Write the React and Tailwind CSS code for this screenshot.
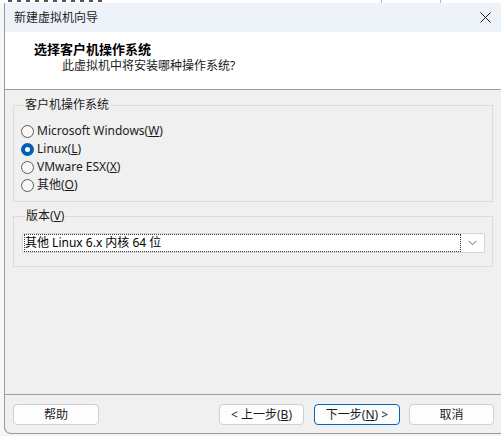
import React from "react";

const font = { fontFamily: '"Noto Sans", "Noto Sans CJK SC", sans-serif' };

const Radio = ({ checked, children }) => (
	<div className="flex items-center h-[18px] gap-[3px]">
		{checked ? (
			<span className="w-[13px] h-[13px] rounded-full bg-[#005fb8] flex items-center justify-center">
				<span className="w-[5px] h-[5px] rounded-full bg-white" />
			</span>
		) : (
			<span className="w-[13px] h-[13px] rounded-full border border-[#5c5c5c] bg-[#f7f7f7]" />
		)}
		<span className="text-[12px] leading-[16px] text-[#1b1b1b]">{children}</span>
	</div>
);

const Button = ({ children, primary, className = "" }) => (
	<button
		className={
			"h-[21px] rounded-[4px] bg-[#fdfdfd] text-[12px] leading-[16px] text-[#1b1b1b] border " +
			(primary ? "border-[#0067c0] " : "border-[#d0d0d0] ") +
			className
		}
	>
		{children}
	</button>
);

// bits of the menu bar of the window behind the dialog
const marks = [8, 14, 40, 46, 52, 60, 66, 100, 106, 112, 120];

export default function App() {
	return (
		<div className="w-[501px] h-[436px] overflow-hidden bg-[#f4f4f4] flex flex-col" style={font}>
			<div className="h-[3px] bg-white flex items-start">
				{marks.map((x, i) => (
					<div key={i} className="w-[4px] h-[2px] bg-[#555] mr-[2px]" style={{ marginLeft: i === 0 ? x : 3 }} />
				))}
				<div className="flex-1" />
				<div className="w-[60px] h-[3px] border-x border-[#bbb] mr-[60px]" />
			</div>
			<div className="flex flex-1">
				<div className="w-[4px] bg-[#f7f7f7]" />
				<div className="flex-1 h-[431px] flex flex-col bg-[#f0f0f0] border-l border-b border-[#9a9a9a] rounded-bl-[7px] rounded-tr-[7px] overflow-hidden">
					<div className="h-[29px] bg-[#eef2f9] flex items-center justify-between pl-[9px] pr-[9px]">
						<span className="text-[12px] text-[#1b1b1b]">新建虚拟机向导</span>
						<svg width="11" height="11" viewBox="0 0 11 11" className="mr-[1px]">
							<path d="M0.5 0.5 L10.5 10.5 M10.5 0.5 L0.5 10.5" stroke="#1b1b1b" strokeWidth="1" />
						</svg>
					</div>
					<div className="h-[58px] bg-white border-b border-[#a0a0a0] flex flex-col pt-[9px]">
						<div className="pl-[29px] text-[13px] leading-[16px] font-bold text-black">选择客户机操作系统</div>
						<div className="pl-[57px] mt-[1px] text-[12px] leading-[16px] text-[#1b1b1b]">此虚拟机中将安装哪种操作系统?</div>
					</div>
					<div className="flex-1 flex flex-col">
						<fieldset className="mt-[7px] mx-[8px] border border-[#dcdcdc] px-[7px] pb-[7px] pt-[9px]">
							<legend className="ml-[3px] px-[1px] text-[12px] leading-[16px] text-[#1b1b1b]">客户机操作系统</legend>
							<Radio>
								Microsoft Windows(<u>W</u>)
							</Radio>
							<Radio checked>
								Linux(<u>L</u>)
							</Radio>
							<Radio>
								VMware ESX(<u>X</u>)
							</Radio>
							<Radio>
								其他(<u>O</u>)
							</Radio>
						</fieldset>
						<fieldset className="mt-[6px] mx-[8px] border border-[#dcdcdc] pl-[8px] pr-[7px] pb-[13px] pt-[9px]">
							<legend className="ml-[3px] px-[1px] text-[12px] leading-[16px] text-[#1b1b1b]">
								版本(<u>V</u>)
							</legend>
							<div className="h-[20px] bg-white border border-[#d4d4d4] rounded-[2px] flex items-center pl-[1px] pr-[7px]">
								<div className="flex-1 h-[18px] border border-dotted border-[#333] flex items-center">
									<span className="text-[12px] leading-[16px] text-black">其他 Linux 6.x 内核 64 位</span>
								</div>
								<svg width="9" height="6" viewBox="0 0 9 6" className="ml-[7px]">
									<path d="M0.5 0.8 L4.5 4.8 L8.5 0.8" stroke="#6a6a6a" strokeWidth="1" fill="none" />
								</svg>
							</div>
						</fieldset>
						<div className="flex-1" />
						<div className="h-[1px] bg-[#a0a0a0]" />
						<div className="h-[38px] flex items-start pt-[9px] pl-[8px] pr-[7px]">
							<Button className="w-[86px]">帮助</Button>
							<div className="flex-1" />
							<Button className="w-[85px]">
								&lt; 上一步(<u>B</u>)
							</Button>
							<Button primary className="w-[86px] ml-[10px]">
								下一步(<u>N</u>) &gt;
							</Button>
							<Button className="w-[85px] ml-[9px]">取消</Button>
						</div>
					</div>
				</div>
			</div>
		</div>
	);
}
